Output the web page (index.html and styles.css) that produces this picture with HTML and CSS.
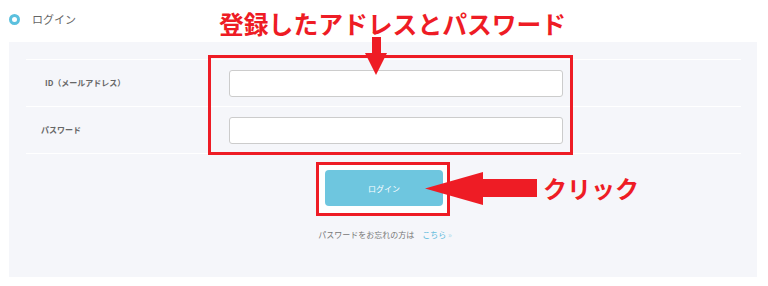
FILE: index.html
```html
<!DOCTYPE html>
<html lang="ja">
<head>
<meta charset="utf-8">
<title>ログイン</title>
<link rel="stylesheet" href="styles.css">
</head>
<body>
<div class="page">
  <header class="header">
    <span class="ring"></span>
    <span class="header-title">ログイン</span>
  </header>
  <section class="panel">
    <div class="rows">
      <div class="row">
        <label class="label label-id">ID（メールアドレス）</label>
        <input class="field" type="text">
      </div>
      <div class="row">
        <label class="label">パスワード</label>
        <input class="field" type="password">
      </div>
    </div>
    <div class="actions">
      <div class="btn-frame"><button class="btn">ログイン</button></div>
      <p class="forgot">パスワードをお忘れの方は<a class="link" href="#">こちら <span class="raquo">»</span></a></p>
    </div>
  </section>

  <div class="note-title">登録したアドレスとパスワード</div>
  <svg class="arrow-down" width="22" height="38" viewBox="0 0 22 38"><polygon points="7,0 16,0 16,16 22,16 11,38 0,16 7,16" fill="#ee1c25"/></svg>
  <div class="box-fields"></div>
  <svg class="arrow-left" width="112" height="33" viewBox="0 0 112 33"><polygon points="0,16.5 58,0 58,7 112,7 112,25 58,25 58,33" fill="#ee1c25"/></svg>
  <div class="note-click">クリック</div>
</div>
</body>
</html>
```

FILE: styles.css
```css
* { box-sizing: border-box; }
html, body { margin: 0; padding: 0; background: #fff; }
body {
  font-family: "Noto Sans CJK JP", "Noto Sans", sans-serif;
  color: #666;
}
.page { position: relative; width: 768px; height: 286px; overflow: hidden; }

.header {
  height: 42px;
  display: flex;
  align-items: center;
  padding-left: 9px;
  padding-bottom: 3px;
}
.ring {
  width: 11px;
  height: 11px;
  border: 3px solid #5bc0de;
  border-radius: 50%;
}
.header-title {
  margin-left: 12px;
  font-size: 11px;
  color: #666;
  line-height: 1;
}

.panel {
  margin: 0 11px 0 9px;
  height: 235px;
  background: #f5f6fa;
  padding: 17px 16px 0 17px;
}
.rows { border-bottom: 1px solid #fff; }
.row {
  height: 47px;
  border-top: 1px solid #fff;
  display: flex;
  align-items: center;
  padding-left: 15px;
}
.label {
  width: 188px;
  font-size: 8px;
  font-weight: bold;
  color: #666;
  line-height: 1;
}
.label-id { padding-left: 4px; }
.field {
  width: 334px;
  height: 27px;
  border: 1px solid #ccc;
  border-radius: 3px;
  background: #fff;
  margin: 0;
  padding: 0 6px;
}

.actions {
  display: flex;
  flex-direction: column;
  align-items: center;
  padding-right: 1px;
}
.btn-frame {
  margin-top: 8px;
  width: 134px;
  height: 54px;
  border: 3px solid #ee1c25;
  background: #fff;
  padding: 5px 3px 6px 6px;
}
.btn {
  display: block;
  width: 118px;
  height: 36px;
  border: 0;
  border-radius: 4px;
  background: #6ec6df;
  color: #fff;
  font-family: inherit;
  font-size: 8px;
  padding: 0;
}
.forgot {
  margin: 13px 0 0 4px;
  font-size: 8px;
  line-height: 12px;
  color: #777;
}
.link {
  margin-left: 8px;
  color: #5bb9db;
  text-decoration: none;
}
.raquo { color: #a9d9ea; }

/* annotations overlaying the screenshot */
.note-title {
  position: absolute;
  left: 219px;
  top: 11px;
  font-size: 24.8px;
  line-height: 1;
  font-weight: bold;
  color: #ee1c25;
  white-space: nowrap;
}
.arrow-down { position: absolute; left: 365px; top: 37px; }
.box-fields {
  position: absolute;
  left: 208px;
  top: 55px;
  width: 365px;
  height: 100px;
  border: 3px solid #ee1c25;
}
.arrow-left { position: absolute; left: 425px; top: 172px; }
.note-click {
  position: absolute;
  left: 543px;
  top: 176px;
  font-size: 24px;
  line-height: 1;
  font-weight: bold;
  color: #ee1c25;
}
```
